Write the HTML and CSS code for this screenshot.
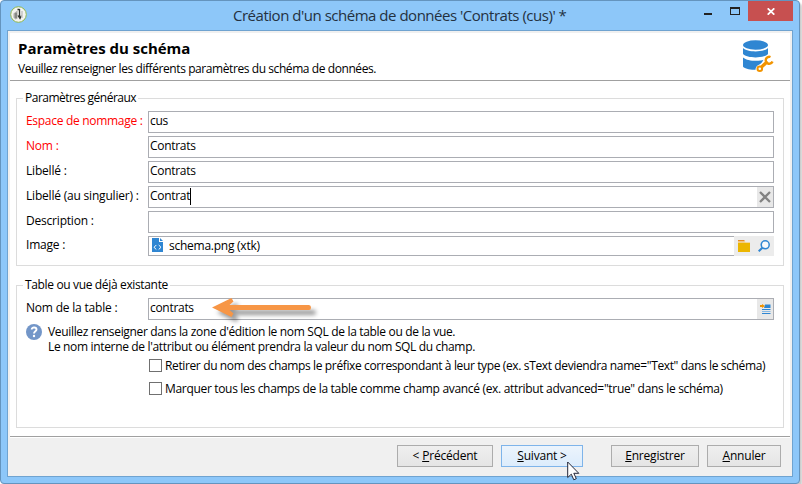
FILE: index.html
```html
<!DOCTYPE html>
<html lang="fr">
<head>
<meta charset="utf-8">
<title>Création d'un schéma de données</title>
<link rel="stylesheet" href="styles.css">
</head>
<body>
<div class="window">
  <header class="titlebar">
    <svg class="app-icon" width="17" height="17" viewBox="0 0 17 17"><circle cx="8.500" cy="8.500" r="7.800" fill="#f4f4f1" stroke="#92b84d"/><path d="M3.500 7.500l4-3v8l-2 1-2-2z" fill="#a9aaa7"/><path d="M6 7v5" stroke="#676965"/><path d="M9.500 3v8M7.500 3.500h2M8 9.500l2 3 1.500-3" fill="none" stroke="#30342f" stroke-width="1.300"/><path d="M12 5v7" stroke="#c6c6c3" stroke-width="1.500"/></svg>
    <h1 class="title"><span class="t-title">Création d'un schéma de données 'Contrats (cus)' *</span></h1>
    <div class="controls">
      <span class="minimize"></span><span class="maximize"></span>
      <span class="close"><svg width="8" height="7" viewBox="0 0 8 7"><path d="M.7.3l6.600 6.400M7.300.3L.7 6.700" stroke="#fff" stroke-width="1.700"/></svg></span>
    </div>
  </header>
  <main class="client">
    <section class="banner">
      <div><h2><span class="t-head">Paramètres du schéma</span></h2><p><span class="t-sub">Veuillez renseigner les différents paramètres du schéma de données.</span></p></div>
      <svg class="db" width="31" height="33" viewBox="0 0 31 33"><g fill="#2f86d2"><ellipse cx="12.500" cy="5" rx="12.500" ry="4.700"/><path d="M0 8c4 4.500 21 4.500 25 0v6c-4 4.500-21 4.500-25 0z"/><path d="M0 17.500c5 4.500 18 3.500 20.500 2.300-1 2.200-2.500 4-5 5.200-2 1-3 2.500-3 4.700C7 30 1 28.500 0 26.500z"/></g><path d="M18.500 27l6-5.500" stroke="#f29400" stroke-width="3.200"/><circle cx="16.800" cy="28.800" r="2.300" fill="#fff" stroke="#f29400" stroke-width="2"/><path d="M27.500 17a3.500 3.500 0 1 0 2 4.500" fill="none" stroke="#f29400" stroke-width="2.400"/></svg>
    </section>
    <section class="content">
      <fieldset class="general">
        <legend><span class="t-leg1">Paramètres généraux</span></legend>
        <div class="row required"><label><span class="t-esp">Espace de nommage :</span></label><div class="input">cus</div></div>
        <div class="row required"><label>Nom :</label><div class="input">Contrats</div></div>
        <div class="row"><label>Libellé :</label><div class="input">Contrats</div></div>
        <div class="row"><label><span class="t-sing">Libellé (au singulier) :</span></label><div class="input">Contrat<i class="caret"></i><span class="tool"><svg width="12" height="12" viewBox="0 0 12 12"><path d="M1 1l10 10M11 1L1 11" stroke="#838383" stroke-width="2.300"/></svg></span></div></div>
        <div class="row"><label>Description :</label><div class="input"></div></div>
        <div class="row"><label>Image :</label><div class="input image">
          <svg class="file" width="11" height="14" viewBox="0 0 11 14"><path d="M0 0h7v4h4v10H0z" fill="#2f86d2"/><path d="M8 0l3 3H8z" fill="#2f86d2"/><path d="M4.300 7L2 9.300l2.300 2.200M6.700 7L9 9.300l-2.300 2.200" fill="none" stroke="#fff"/></svg><span class="t-img">schema.png (xtk)</span>
          <span class="pickers"><svg width="12" height="12" viewBox="0 0 12 12"><path d="M0 3h12v9H0z" fill="#ecb600"/><path d="M0 0h6.500v1.500H0z" fill="#e98b20"/><path d="M0 1.500h7l.5.700H12V3H0z" fill="#f3cf83"/></svg><svg width="12" height="12" viewBox="0 0 12 12"><circle cx="7.200" cy="4.800" r="4" fill="#f7f9fb" stroke="#2f86d2" stroke-width="1.500"/><path d="M4.400 7.800L.7 11.300" stroke="#2f86d2" stroke-width="2"/></svg></span>
        </div></div>
      </fieldset>
      <fieldset class="existing">
        <legend><span class="t-leg2">Table ou vue déjà existante</span></legend>
        <div class="row"><label><span class="t-tab">Nom de la table :</span></label><div class="input">contrats<span class="tool"><svg width="11" height="10" viewBox="0 0 11 10"><path d="M5 .5h5.500v3.500H4z" fill="#2f86d2"/><path d="M2 5.500h8.500M2 9.500h8.500" stroke="#2f86d2"/><path d="M2 7.500h8.500" stroke="#83b8e5"/><path d="M0 1h2V0l3 2-3 2V3H0z" fill="#f29400"/></svg></span>
          <svg class="arrow" width="112" height="34" viewBox="0 0 112 34"><path d="M5 15.500L24.500 6l2 3.500-4 3.500H102q2 0 2 2.500t-2 2.500H22.500l4 3.500-2 3.500z" fill="#f79646"/></svg></div></div>
        <div class="hint"><svg width="16" height="16" viewBox="0 0 16 16"><circle cx="8" cy="8" r="8" fill="#7396c8"/><path d="M5.700 5.600C5.700 2.700 10.500 3 10.500 5.600 10.500 7.300 8 7.400 8 9.600" fill="none" stroke="#fff" stroke-width="1.900"/><circle cx="8" cy="12" r="1.200" fill="#fff"/></svg>
          <div class="lines"><p class="t-h1">Veuillez renseigner dans la zone d'édition le nom SQL de la table ou de la vue.</p><p class="t-h2">Le nom interne de l'attribut ou élément prendra la valeur du nom SQL du champ.</p></div></div>
        <div class="check"><i></i><span class="t-c1">Retirer du nom des champs le préfixe correspondant à leur type (ex. sText deviendra name="Text" dans le schéma)</span></div>
        <div class="check"><i></i><span class="t-c2">Marquer tous les champs de la table comme champ avancé (ex. attribut advanced="true" dans le schéma)</span></div>
      </fieldset>
    </section>
    <footer class="actions">
      <div class="button prev"><span>&lt; <u>P</u>récédent</span></div>
      <div class="button next"><span><u>S</u>uivant &gt;</span></div>
      <div class="button save"><span><u>E</u>nregistrer</span></div>
      <div class="button cancel"><span><u>A</u>nnuler</span></div>
    </footer>
  </main>
</div>
<svg class="cursor" width="13" height="20" viewBox="0 0 13 20"><path d="M.7 1v15.500l3.600-3.300 2.500 5.600 2.500-1.200-2.500-5.300h5z" fill="#fff" stroke="#222537"/></svg>
</body>
</html>
```
FILE: styles.css
```css
* { box-sizing: border-box; }
body {
  margin: 0; width: 802px; height: 484px; overflow: hidden; background: #fff;
  font: 12px/16px "Open Sans", "Noto Sans", sans-serif; color: #000; letter-spacing: -.2px;
}
h1, h2, p { margin: 0; font-weight: 400; }
span { white-space: nowrap; }
svg { display: block; flex: none; }
.window {
  width: 800px; height: 484px; padding: 0 6px 6px; background: #8dc7f9;
  border: 1px solid #6494be; border-radius: 4px; box-shadow: 2px 3px 2px #ccc;
}
.titlebar { height: 29px; display: flex; position: relative; }
.app-icon { margin: 5px 0 0 3px; }
.title { position: absolute; left: 226px; top: 4px; font-size: 15px; line-height: 20px; color: #24313f; }
.controls { display: flex; margin-left: auto; align-items: flex-start; }
.minimize { width: 8px; height: 2px; background: #222; margin: 12px 18px 0 0; }
.maximize { width: 10px; height: 8px; border: 1px solid #222; border-top-width: 2px; margin: 6px 8px 0 0; }
.close { width: 45px; height: 20px; background: #c75050; display: flex; align-items: center; justify-content: center; padding-top: 1px; }
.client {
  height: 447px; border: 1px solid #6fa3d0; background: #f0f0f0; padding: 2px 2px 0;
  display: flex; flex-direction: column;
}
.banner { height: 48px; background: #fff; border-bottom: 1px solid #a0a0a0; display: flex; justify-content: space-between; padding: 7px 16px 0 8px; }
.banner h2 { font-size: 15px; line-height: 18px; font-weight: 700; margin-top: -1px; }
.banner p { margin-top: 4px; }
.content { height: 355px; background: #fff; padding: 9px 6px 0; display: flex; flex-direction: column; gap: 11px; flex: none; }
fieldset { margin: 0; padding: 0 9px; border: 1px solid #dcdcdc; min-width: 0; }
legend { padding: 0 2px; margin-left: -3px; height: 16px; }
.general { height: 176px; }
.existing { height: 151px; }
.row { display: flex; height: 22px; margin-bottom: 3px; }
.general legend + .row { margin-top: 5px; }
.existing .row { margin: 5px 0 4px; }
.row label { width: 122px; line-height: 18px; margin-top: 1px; flex: none; }
.input { width: 626px; height: 22px; border: 1px solid #abadb3; padding: 0 0 0 1px; line-height: 18px; display: flex; position: relative; letter-spacing: -.3px; }
.required label { color: #f00; }
.caret { width: 1px; height: 17px; background: #000; margin-top: 1px; }
.tool { width: 16px; background: #e8e8e8; margin-left: auto; display: flex; align-items: center; justify-content: center; }
.input.image { height: 20px; border-right: 0; padding-left: 3px; line-height: 17px; }
.row:last-child label { margin-top: 0; }
.file { margin: 1px 6px 0 0; }
.pickers { width: 40px; height: 20px; margin: -1px 0 0 auto; background: #ececec; display: flex; align-items: center; justify-content: space-between; padding: 0 4px; }
.arrow { position: absolute; left: 58px; top: -7px; filter: drop-shadow(5px 5px 2px #0006); }
.hint { display: flex; gap: 6px; height: 34px; }
.hint p { line-height: 15px; height: 15px; white-space: nowrap; }
.check { display: flex; gap: 3px; height: 23px; padding-left: 123px; line-height: 15px; }
.check i { width: 13px; height: 13px; border: 1px solid #707070; margin-top: 1px; flex: none; }
.actions { display: flex; padding: 8px 8px 0 387px; border-top: 1px solid #a0a0a0; box-shadow: inset 0 1px #fff; flex: 1; }
.button { height: 22px; border: 1px solid #acacac; background: linear-gradient(#efefef, #e5e5e5); text-align: center; line-height: 20px; }
.prev { width: 96px; margin-right: 8px; }
.next { width: 82px; margin-right: 28px; border-color: #7eb4ea; background: linear-gradient(#ecf4fc, #dcecfc); }
.save { width: 88px; margin-right: 8px; }
.cancel { width: 74px; }
.cursor { position: absolute; left: 567px; top: 461px; }
.t-title { letter-spacing: -.48px; }
.t-head { letter-spacing: 0; }
.t-sub { letter-spacing: -.42px; }
.t-leg1 { letter-spacing: -.5px; }
.t-leg2 { letter-spacing: -.35px; }
.t-esp { letter-spacing: -.3px; }
.t-h1 { letter-spacing: -.33px; }
.t-h2 { letter-spacing: -.34px; }
.t-c1 { letter-spacing: -.37px; }
.t-c2 { letter-spacing: -.32px; }
.t-img { letter-spacing: -.25px; }
```
